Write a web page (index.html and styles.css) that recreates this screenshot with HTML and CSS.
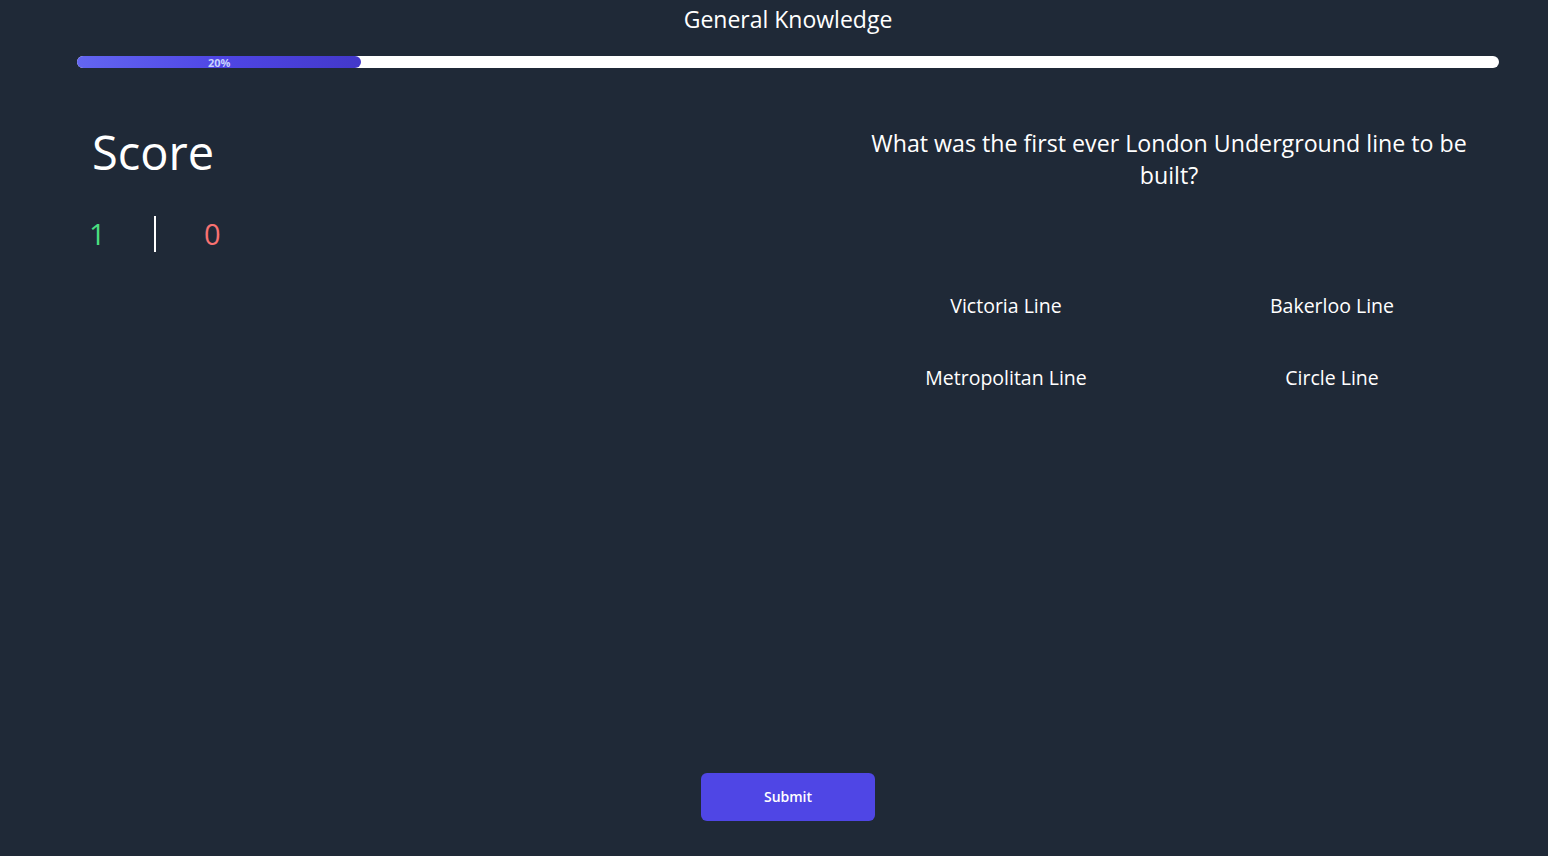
FILE: index.html
```html
<!DOCTYPE html>
<html lang="en">
<head>
<meta charset="utf-8">
<title>General Knowledge</title>
<link rel="stylesheet" href="styles.css">
</head>
<body>
<div class="page">
  <h1 class="title">General Knowledge</h1>
  <div class="progress">
    <div class="progress-fill" style="width: 20%;">20%</div>
  </div>
  <main class="main">
    <section class="score">
      <h2 class="score-title">Score</h2>
      <div class="score-row">
        <span class="correct">1</span>
        <span class="divider"></span>
        <span class="wrong">0</span>
      </div>
    </section>
    <section class="quiz">
      <p class="question">What was the first ever London Underground line to be built?</p>
      <div class="answers">
        <button class="answer">Victoria Line</button>
        <button class="answer">Bakerloo Line</button>
        <button class="answer">Metropolitan Line</button>
        <button class="answer">Circle Line</button>
      </div>
    </section>
  </main>
  <div class="actions">
    <button class="submit">Submit</button>
  </div>
</div>
</body>
</html>
```

FILE: styles.css
```css
html, body {
  margin: 0;
  padding: 0;
  background: #1f2937;
  overflow: hidden;
  height: 856px;
}
body {
  font-family: "Open Sans", "Noto Sans", sans-serif;
  color: #ffffff;
}
.page {
  width: 1576px;
  height: 856px;
  display: flex;
  flex-direction: column;
}
.title {
  margin: 0;
  padding-top: 3px;
  padding-bottom: 1px;
  font-size: 23px;
  line-height: 32px;
  font-weight: 400;
  text-align: center;
}
.progress {
  margin: 20px 77px 0 77px;
  height: 12px;
  background: #ffffff;
  border-radius: 6px;
}
.progress-fill {
  height: 12px;
  border-radius: 6px;
  background: linear-gradient(90deg, #6366f1, #4f46e5 50%, #4338ca);
  color: #c7d2fe;
  font-size: 11px;
  font-weight: 700;
  line-height: 13px;
  text-align: center;
}
.main {
  display: flex;
  flex: 1;
}
.score {
  width: 843px;
  padding-left: 89px;
  box-sizing: border-box;
}
.score-title {
  margin: 56px 0 0 3px;
  font-size: 47px;
  line-height: 56px;
  font-weight: 400;
}
.score-row {
  display: flex;
  align-items: center;
  margin-top: 36px;
  height: 36px;
  font-size: 29px;
  line-height: 36px;
}
.correct {
  color: #4ade80;
  width: 14px;
}
.divider {
  width: 2px;
  height: 36px;
  background: #ffffff;
  margin-left: 51px;
}
.wrong {
  color: #f87171;
  margin-left: 48px;
}
.quiz {
  width: 652px;
  display: flex;
  flex-direction: column;
  align-items: center;
}
.question {
  width: 620px;
  margin: 59px 0 0 0;
  font-size: 23.2px;
  line-height: 32px;
  text-align: center;
}
.answers {
  width: 100%;
  margin-top: 101px;
  display: grid;
  grid-template-columns: 1fr 1fr;
  row-gap: 44px;
}
.answer {
  background: none;
  border: none;
  color: #ffffff;
  font-family: inherit;
  font-size: 19.5px;
  line-height: 28px;
  padding: 0;
  text-align: center;
}
.actions {
  display: flex;
  justify-content: center;
  padding-bottom: 35px;
}
.submit {
  width: 174px;
  height: 48px;
  border: none;
  border-radius: 6px;
  background: #4f46e5;
  color: #ffffff;
  font-family: inherit;
  font-size: 14px;
  font-weight: 600;
  line-height: 47px;
  padding: 0 0 1px 0;
}
```
